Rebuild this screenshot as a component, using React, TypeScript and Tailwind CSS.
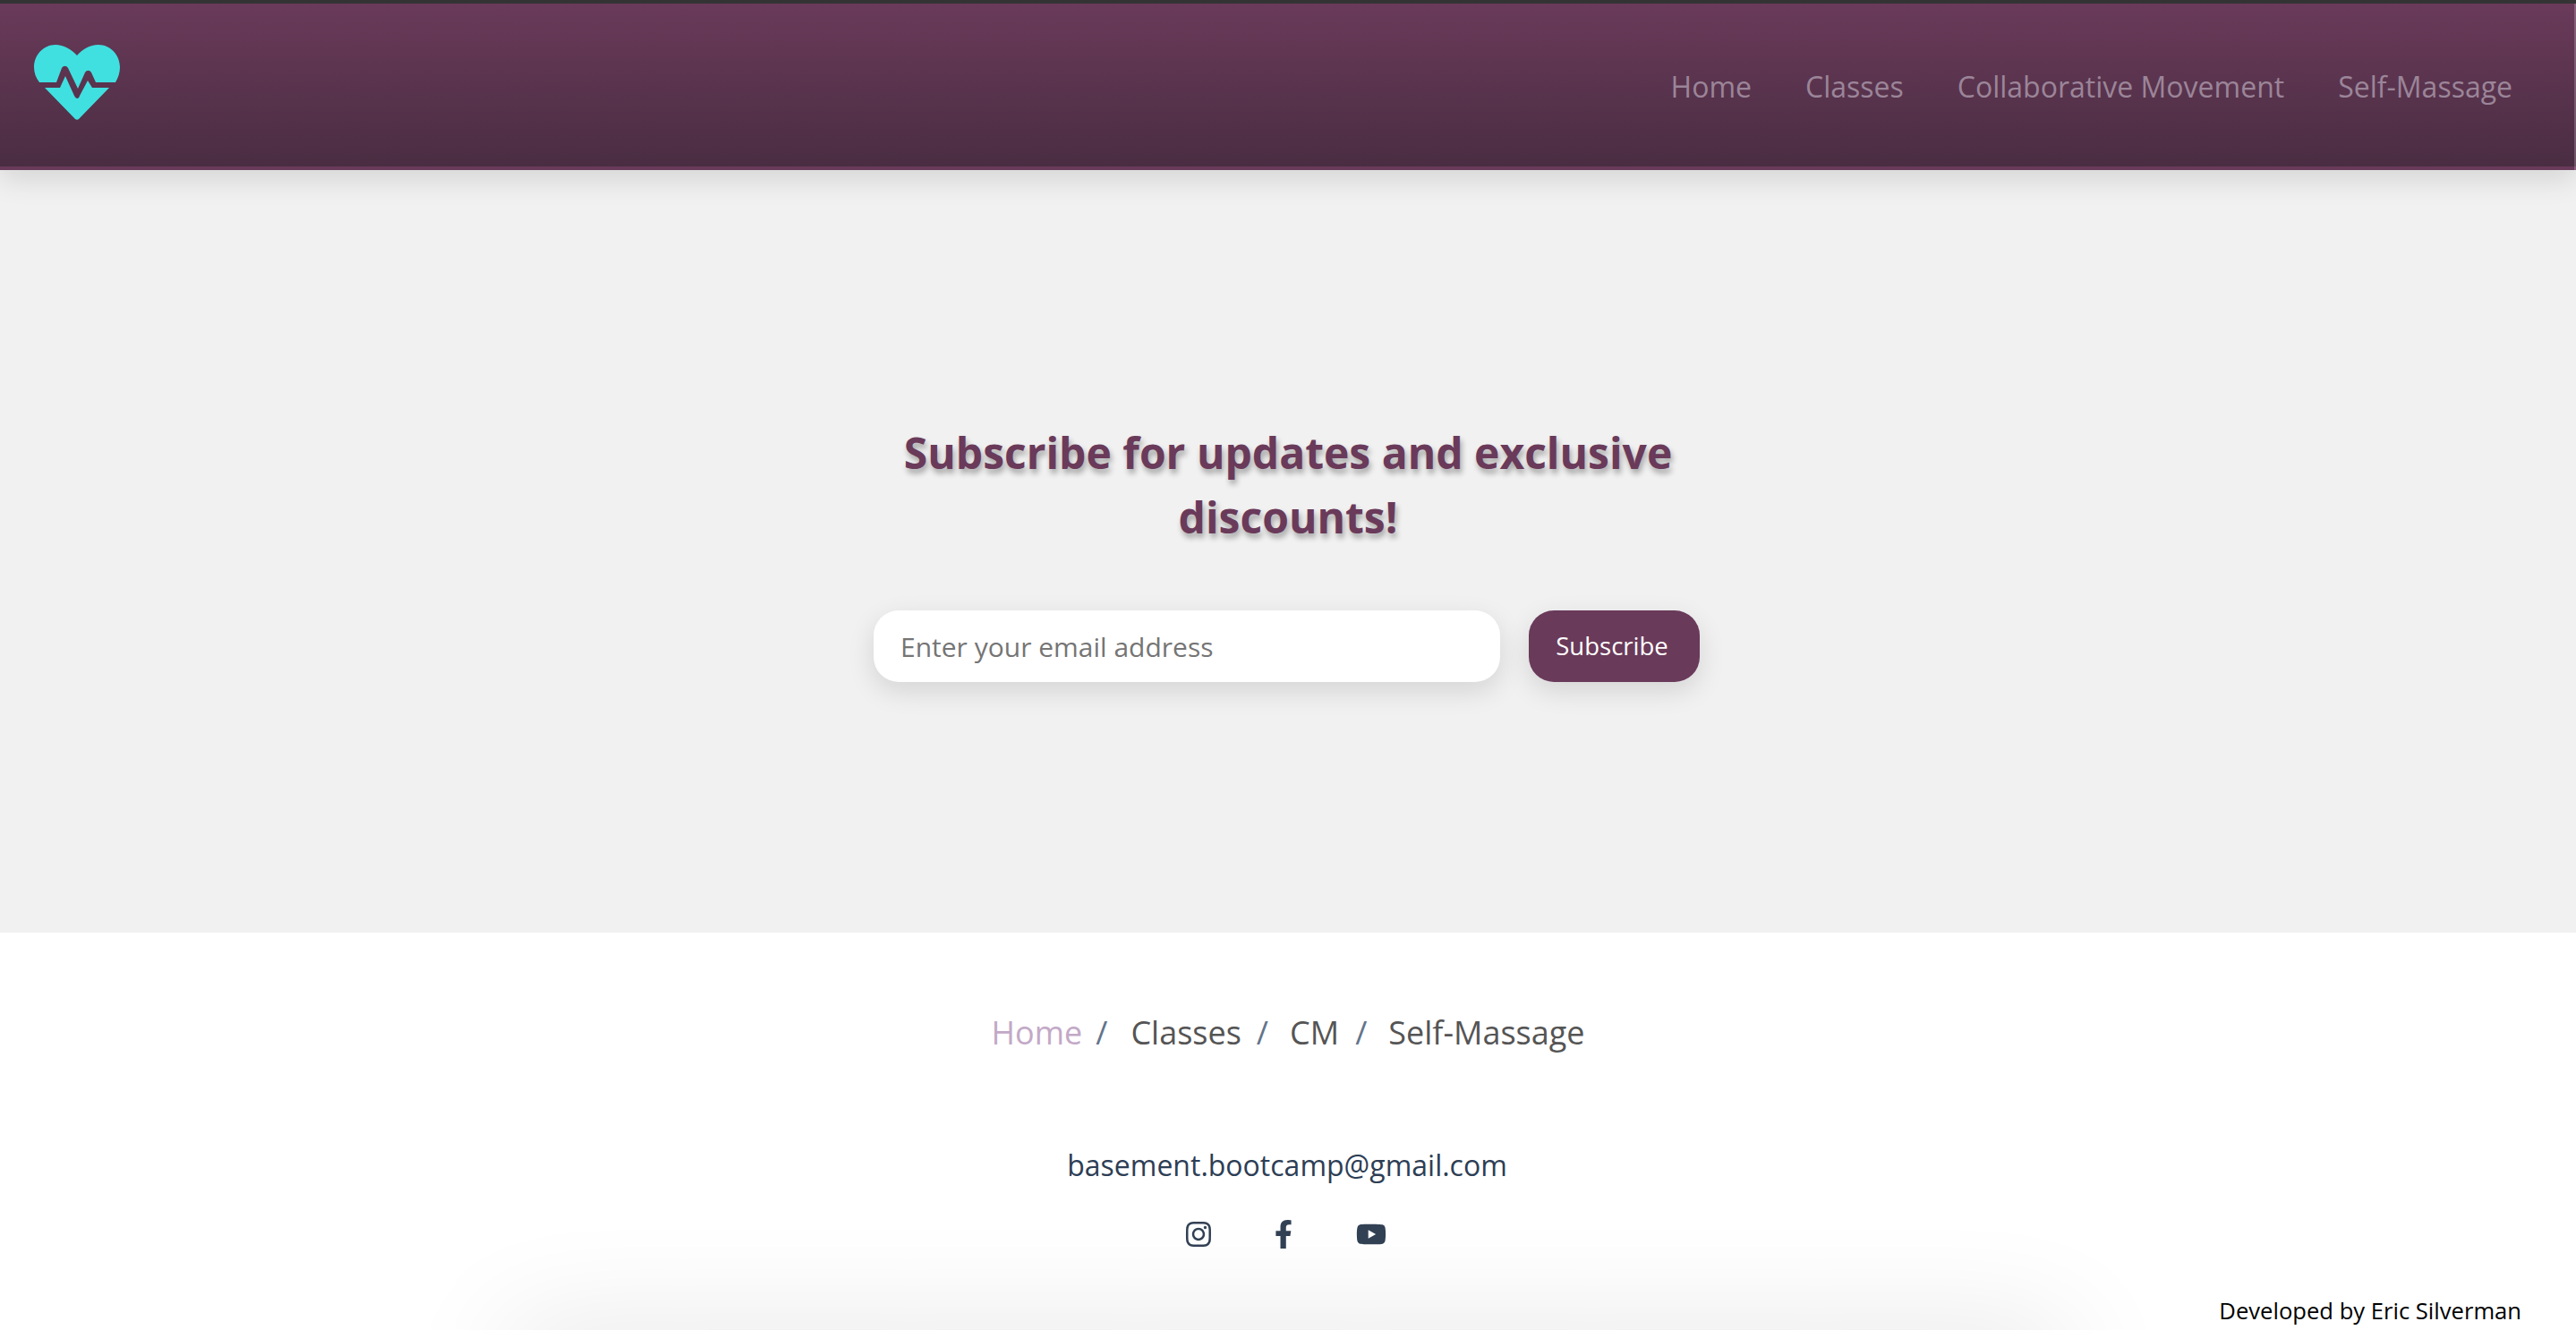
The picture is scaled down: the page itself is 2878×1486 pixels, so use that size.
import React from "react";
import { FaFacebookF, FaInstagram, FaYoutube } from "react-icons/fa";

const navLinks = ["Home", "Classes", "Collaborative Movement", "Self-Massage"];

const Logo = () => (
  <svg className="-mt-[6px]" width="96" height="84" viewBox="38 50 96 84" fill="#40e0e0">
    <path d="M44 92C40 87 38 81 38 75C38 61 49 50 62 50C71 50 80 55 86 62C92 55 100 50 110 50C123 50 134 61 134 75C134 81 132 87 129 92H107L102 81C100 78 97 78 95 81L87 99L76 76C74 73 71 73 69 76L63 92Z" />
    <path d="M50 98H67L73 85L83 107C85 111 88 111 89 107L98 90L103 98H122L88 133C87 134 85 134 84 133Z" />
  </svg>
);

const App = () => {
  return (
    <div className="h-screen overflow-hidden bg-white font-['Open_Sans',sans-serif]">
      <header className="relative z-10 flex h-[190px] items-center justify-between border-t-4 border-b-4 border-t-[#333333] border-b-[#6a3a5a] bg-gradient-to-b from-[#6a3a5a] to-[#4a2d42] pl-[38px] pr-[70px] shadow-[0_10px_30px_rgba(0,0,0,0.12)]">
        <Logo />
        <nav className="flex gap-[60px] pt-[3px] pr-[1px] text-[32px] text-[#9b8599]">
          {navLinks.map((link) => (
            <a key={link}>{link}</a>
          ))}
        </nav>
        <span className="absolute top-0 right-0 -bottom-1 w-[2px] bg-white/20" />
      </header>

      <section className="flex h-[852px] flex-col items-center justify-center bg-[#f1f1f1]">
        <h2 className="w-[940px] text-center text-[48px] leading-[72px] font-bold text-[#6a3a5a] [text-shadow:2px_5px_6px_rgba(0,0,0,0.32)]">
          Subscribe for updates and exclusive discounts!
        </h2>
        <form className="mt-[68px] mr-[3px] flex gap-8">
          <input
            className="h-20 w-[700px] rounded-[28px] bg-white px-[30px] text-[30px] text-[#333333] shadow-[0_10px_30px_rgba(0,0,0,0.12)] outline-none placeholder:text-[#757575]"
            placeholder="Enter your email address"
          />
          <button
            type="button"
            className="h-20 w-[191px] rounded-[28px] bg-[#6a3a5a] pr-[5px] text-[27.5px] text-white shadow-[0_10px_30px_rgba(0,0,0,0.12)]"
          >
            Subscribe
          </button>
        </form>
      </section>

      <footer className="relative flex flex-col items-center">
        <div className="flex pt-[85px] text-[36px] leading-[54px] text-[#555555]">
          <a className="text-[#c3a9c7]">Home</a>
          <span className="ml-[15px] text-[#64748b]">/</span>
          <a className="ml-[26px]">Classes</a>
          <span className="ml-[17px] text-[#64748b]">/</span>
          <a className="ml-[24px]">CM</a>
          <span className="ml-[18px] text-[#64748b]">/</span>
          <a className="ml-[24px]">Self-Massage</a>
        </div>
        <p className="mt-[97px] mr-[2px] text-[32px] leading-[48px] text-[#2d3e55]">
          basement.bootcamp@gmail.com
        </p>
        <div className="mt-[36px] mr-[7px] flex items-center gap-[63px] text-[#334155]">
          <FaInstagram size={32} />
          <FaFacebookF size={32} />
          <FaYoutube className="ml-[2px]" size={34} />
        </div>
        <div className="mt-[93px] h-20 w-[1740px] shrink-0 bg-white shadow-[0_0_130px_rgba(0,0,0,0.12)]" />
        <p className="absolute right-[61px] top-[403px] text-[25.6px] leading-[39px] text-black">
          Developed by Eric Silverman
        </p>
      </footer>
    </div>
  );
};

export default App;
